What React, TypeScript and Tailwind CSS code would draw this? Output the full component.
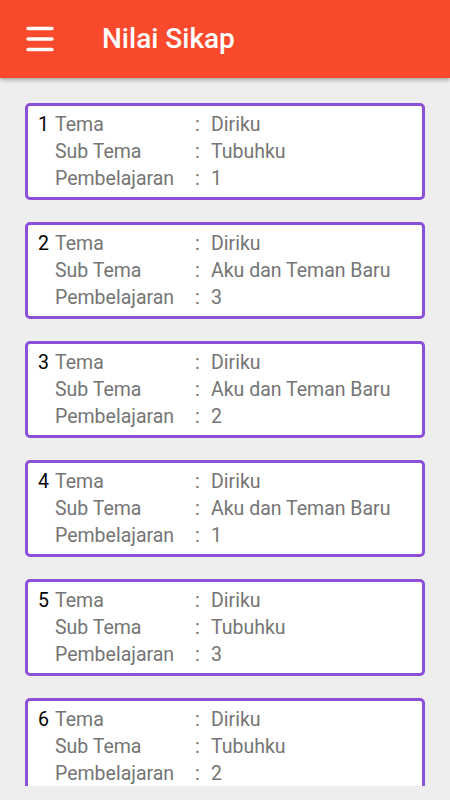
import { Menu } from "lucide-react";

type Item = {
  tema: string;
  subTema: string;
  pembelajaran: string;
};

const items: Item[] = [
  { tema: "Diriku", subTema: "Tubuhku", pembelajaran: "1" },
  { tema: "Diriku", subTema: "Aku dan Teman Baru", pembelajaran: "3" },
  { tema: "Diriku", subTema: "Aku dan Teman Baru", pembelajaran: "2" },
  { tema: "Diriku", subTema: "Aku dan Teman Baru", pembelajaran: "1" },
  { tema: "Diriku", subTema: "Tubuhku", pembelajaran: "3" },
  { tema: "Diriku", subTema: "Tubuhku", pembelajaran: "2" },
];

function Row({ num, label, value }: { num?: number; label: string; value: string }) {
  return (
    <div className="flex h-[27px] items-center">
      <span className="w-[17px] text-black">{num}</span>
      <span className="w-[140px] text-[#757575]">{label}</span>
      <span className="w-[16px] text-[#757575]">:</span>
      <span className="text-[#757575]">{value}</span>
    </div>
  );
}

export default function App() {
  return (
    <main
      className="h-[800px] w-[450px] overflow-hidden bg-[#eeeeee]"
      style={{ fontFamily: "Roboto, 'Noto Sans', sans-serif" }}
    >
      {/* Toolbar */}
      <header className="relative z-10 flex h-[78px] items-center bg-[#f94a2d] shadow-[0_2px_4px_rgba(0,0,0,0.3)]">
        <Menu className="ml-[22px] h-[36px] w-[36px] text-white" strokeWidth={2.2} />
        <h1 className="ml-[44px] text-[28px] font-medium text-white">Nilai Sikap</h1>
      </header>

      {/* List */}
      <div className="h-[708px] overflow-hidden">
        <div className="flex flex-col gap-[22px] px-[25px] pt-[25px]">
          {items.map((item, idx) => (
            <div
              key={idx}
              className="h-[97px] shrink-0 rounded-[5px] border-[3px] border-[#8b4fd9] bg-white pl-[10px] pt-[5px] text-[19.5px]"
            >
              <Row num={idx + 1} label="Tema" value={item.tema} />
              <Row label="Sub Tema" value={item.subTema} />
              <Row label="Pembelajaran" value={item.pembelajaran} />
            </div>
          ))}
        </div>
      </div>
    </main>
  );
}
